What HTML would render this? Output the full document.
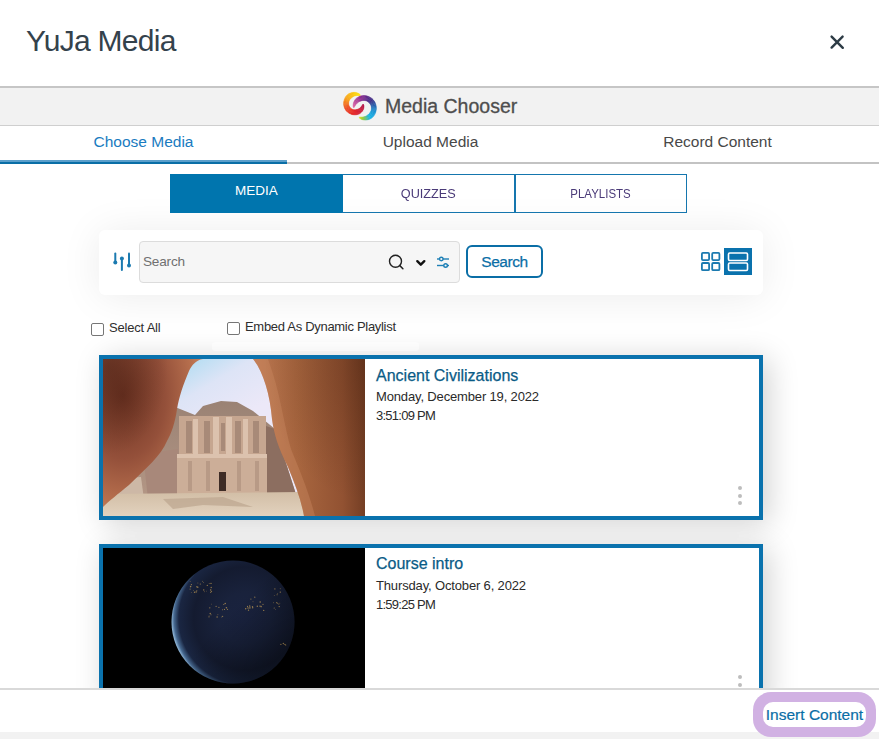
<!DOCTYPE html>
<html><head><meta charset="utf-8">
<style>
*{box-sizing:border-box;margin:0;padding:0}
html,body{width:879px;height:739px;overflow:hidden;background:#fff;font-family:"Liberation Sans",sans-serif;position:relative}
.abs{position:absolute}
.title{left:26px;top:22px;font-size:30px;letter-spacing:-0.7px;color:#34424c;line-height:38px;white-space:nowrap}
.close{left:831px;top:36px;width:12px;height:12px}
.bar{left:0;top:86px;width:879px;height:40px;background:#f2f2f2;border-top:2px solid #c6c6c6;border-bottom:1px solid #cfcfcf}
.mc{left:385px;top:95px;font-size:19.5px;color:#4e4e4e;-webkit-text-stroke:0.3px #4e4e4e;line-height:22px;white-space:nowrap}
.tab{top:126px;height:36px;line-height:32px;font-size:15.5px;text-align:center;color:#484848;white-space:nowrap}
.gline{left:0;top:162px;width:879px;height:2px;background:#c3c3c3}
.bline1{left:0;top:160px;width:287px;height:2px;background:#5b9fcb}
.bline2{left:0;top:162px;width:287px;height:2px;background:#0a6ea6}
.footer{left:0;top:688px;width:879px;height:44px;background:#fff;border-top:2px solid #d9d9d9}
.bottom{left:0;top:732px;width:879px;height:7px;background:#f2f2f2}
.st{top:174px;height:39px;font-size:13.5px;text-align:center;white-space:nowrap}
.st1{left:170px;width:173px;background:#0075ae;color:#fff;line-height:34px}
.st2{left:342px;width:173px;border:1px solid #1576ae;border-left:none;color:#4a3a78;line-height:38px}
.st3{left:514px;width:173px;border:1px solid #1576ae;border-left-width:2px;color:#4a3a78;line-height:38px}
.scard{left:99px;top:230px;width:664px;height:65px;background:#fff;border-radius:6px;box-shadow:0 2px 40px rgba(0,0,0,.08)}
.sinput{left:139px;top:241px;width:321px;height:42px;background:#f6f6f6;border:1px solid #dcdcdc;border-radius:4px}
.sph{left:143px;top:253px;font-size:13.6px;letter-spacing:-0.2px;color:#707070;line-height:18px}
.sbtn{left:466px;top:245px;width:77px;height:33px;border:2px solid #0a6ea6;border-radius:6px;color:#0a6ea6;font-size:15.5px;letter-spacing:-0.45px;-webkit-text-stroke:0.25px #0a6ea6;line-height:29px;text-align:center}
.cb{width:13px;height:13px;border:1px solid #767676;border-radius:2px;background:#fff}
.lbl{font-size:13px;color:#2e2e2e;line-height:16px;white-space:nowrap}
.card{left:99px;width:664px;height:165px;border:4px solid #0a72ad;background:#fff;box-shadow:6px 4px 28px rgba(0,0,0,.18)}
.ctitle{font-size:16px;color:#0a5b86;-webkit-text-stroke:0.25px #0a5b86;line-height:20px;white-space:nowrap}
.cdate{font-size:13px;color:#2a2a2a;line-height:16px;white-space:nowrap}
.dot{width:4px;height:4px;border-radius:50%;background:#bdbdbd}
.ins{left:753px;top:692px;width:123px;height:45px;border-radius:18px;background:#d1b1e3}
.insin{left:763px;top:702px;width:103px;height:25px;border-radius:10px;background:#fff;color:#0a6ea6;-webkit-text-stroke:0.2px #0a6ea6;font-size:15.5px;line-height:26px;text-align:center;white-space:nowrap}
</style></head><body>
<div class="abs title">YuJa Media</div>
<svg class="abs close" viewBox="0 0 12 12" style="overflow:visible"><path d="M0.6 0.6L11.8 11.8M11.6 0.6L0.6 11.6" stroke="#2d3b45" stroke-width="2.4" stroke-linecap="round"/></svg>
<div class="abs bar"></div>
<svg class="abs" style="left:338px;top:88px" width="45" height="36" viewBox="0 0 45 36"><path d="M22.39 7.40L21.74 6.29L21.14 7.55L22.39 7.40Z" fill="#fee500" stroke="#fee500" stroke-width="0.45"/><path d="M21.74 6.29L20.79 5.58L20.11 7.50L21.14 7.55Z" fill="#fee102" stroke="#fee102" stroke-width="0.45"/><path d="M20.79 5.58L19.71 5.04L19.13 7.52L20.11 7.50Z" fill="#fddc04" stroke="#fddc04" stroke-width="0.45"/><path d="M19.71 5.04L18.56 4.66L18.19 7.61L19.13 7.52Z" fill="#fdd706" stroke="#fdd706" stroke-width="0.45"/><path d="M18.56 4.66L17.35 4.42L17.30 7.77L18.19 7.61Z" fill="#fdd308" stroke="#fdd308" stroke-width="0.45"/><path d="M17.35 4.42L16.11 4.35L16.46 8.02L17.30 7.77Z" fill="#fcce09" stroke="#fcce09" stroke-width="0.45"/><path d="M16.11 4.35L14.85 4.43L15.66 8.33L16.46 8.02Z" fill="#fcc90b" stroke="#fcc90b" stroke-width="0.45"/><path d="M14.85 4.43L13.60 4.66L14.92 8.72L15.66 8.33Z" fill="#fbc50d" stroke="#fbc50d" stroke-width="0.45"/><path d="M13.60 4.66L12.38 5.04L14.24 9.16L14.92 8.72Z" fill="#fbc00f" stroke="#fbc00f" stroke-width="0.45"/><path d="M12.38 5.04L11.21 5.56L13.62 9.66L14.24 9.16Z" fill="#fbbb11" stroke="#fbbb11" stroke-width="0.45"/><path d="M11.21 5.56L10.10 6.23L13.07 10.21L13.62 9.66Z" fill="#fab712" stroke="#fab712" stroke-width="0.45"/><path d="M10.10 6.23L9.12 7.08L12.53 10.74L13.07 10.21Z" fill="#fab214" stroke="#fab214" stroke-width="0.45"/><path d="M9.12 7.08L8.25 8.04L12.04 11.31L12.53 10.74Z" fill="#f9ad16" stroke="#f9ad16" stroke-width="0.45"/><path d="M8.25 8.04L7.50 9.09L11.62 11.92L12.04 11.31Z" fill="#f9a918" stroke="#f9a918" stroke-width="0.45"/><path d="M7.50 9.09L6.86 10.21L11.26 12.58L11.62 11.92Z" fill="#f8a41a" stroke="#f8a41a" stroke-width="0.45"/><path d="M6.86 10.21L6.35 11.39L10.99 13.27L11.26 12.58Z" fill="#f79a1b" stroke="#f79a1b" stroke-width="0.45"/><path d="M6.35 11.39L5.98 12.62L10.79 13.97L10.99 13.27Z" fill="#f6911b" stroke="#f6911b" stroke-width="0.45"/><path d="M5.98 12.62L5.73 13.87L10.67 14.70L10.79 13.97Z" fill="#f5871c" stroke="#f5871c" stroke-width="0.45"/><path d="M5.73 13.87L5.63 15.14L10.62 15.42L10.67 14.70Z" fill="#f47e1d" stroke="#f47e1d" stroke-width="0.45"/><path d="M5.63 15.14L5.67 16.41L10.66 16.15L10.62 15.42Z" fill="#f3741e" stroke="#f3741e" stroke-width="0.45"/><path d="M5.67 16.41L5.84 17.66L10.77 16.86L10.66 16.15Z" fill="#f26b1f" stroke="#f26b1f" stroke-width="0.45"/><path d="M5.84 17.66L6.14 18.88L10.96 17.54L10.77 16.86Z" fill="#f06120" stroke="#f06120" stroke-width="0.45"/><path d="M6.14 18.88L6.58 20.06L11.22 18.20L10.96 17.54Z" fill="#ef5821" stroke="#ef5821" stroke-width="0.45"/><path d="M6.58 20.06L7.13 21.18L11.55 18.83L11.22 18.20Z" fill="#ee4e22" stroke="#ee4e22" stroke-width="0.45"/><path d="M7.13 21.18L7.81 22.22L11.94 19.41L11.55 18.83Z" fill="#ed4723" stroke="#ed4723" stroke-width="0.45"/><path d="M7.81 22.22L8.59 23.18L12.39 19.94L11.94 19.41Z" fill="#ec4323" stroke="#ec4323" stroke-width="0.45"/><path d="M8.59 23.18L9.47 24.05L12.89 20.41L12.39 19.94Z" fill="#eb3e23" stroke="#eb3e23" stroke-width="0.45"/><path d="M9.47 24.05L10.43 24.82L13.44 20.82L12.89 20.41Z" fill="#e93923" stroke="#e93923" stroke-width="0.45"/><path d="M10.43 24.82L11.47 25.47L14.02 21.17L13.44 20.82Z" fill="#e83523" stroke="#e83523" stroke-width="0.45"/><path d="M11.47 25.47L12.57 26.00L14.64 21.45L14.02 21.17Z" fill="#e73023" stroke="#e73023" stroke-width="0.45"/><path d="M12.57 26.00L13.71 26.41L15.28 21.66L14.64 21.45Z" fill="#e62c23" stroke="#e62c23" stroke-width="0.45"/><path d="M13.71 26.41L14.89 26.69L15.93 21.80L15.28 21.66Z" fill="#e52723" stroke="#e52723" stroke-width="0.45"/><path d="M14.89 26.69L16.09 26.84L16.59 21.86L15.93 21.80Z" fill="#e42323" stroke="#e42323" stroke-width="0.45"/><path d="M16.09 26.84L17.30 26.85L17.25 21.85L16.59 21.86Z" fill="#e31e23" stroke="#e31e23" stroke-width="0.45"/><path d="M17.30 26.85L18.49 26.74L17.90 21.77L17.25 21.85Z" fill="#df1d26" stroke="#df1d26" stroke-width="0.45"/><path d="M18.49 26.74L19.66 26.49L18.54 21.62L17.90 21.77Z" fill="#dc1d29" stroke="#dc1d29" stroke-width="0.45"/><path d="M19.66 26.49L20.79 26.11L19.15 21.42L18.54 21.62Z" fill="#d81c2c" stroke="#d81c2c" stroke-width="0.45"/><path d="M20.79 26.11L21.83 25.52L19.78 21.23L19.15 21.42Z" fill="#d51c2f" stroke="#d51c2f" stroke-width="0.45"/><path d="M21.83 25.52L22.78 24.83L20.40 20.98L19.78 21.23Z" fill="#d11b32" stroke="#d11b32" stroke-width="0.45"/><path d="M22.78 24.83L23.62 24.04L21.00 20.67L20.40 20.98Z" fill="#ce1b35" stroke="#ce1b35" stroke-width="0.45"/><path d="M23.62 24.04L24.36 23.16L21.57 20.30L21.00 20.67Z" fill="#ca1a38" stroke="#ca1a38" stroke-width="0.45"/><path d="M24.36 23.16L24.97 22.21L22.12 19.87L21.57 20.30Z" fill="#c71a3b" stroke="#c71a3b" stroke-width="0.45"/><path d="M24.97 22.21L25.45 21.21L22.65 19.38L22.12 19.87Z" fill="#c3193d" stroke="#c3193d" stroke-width="0.45"/><path d="M25.45 21.21L25.79 20.18L23.14 18.83L22.65 19.38Z" fill="#bf1940" stroke="#bf1940" stroke-width="0.45"/><path d="M25.79 20.18L25.98 19.13L23.60 18.23L23.14 18.83Z" fill="#bc1843" stroke="#bc1843" stroke-width="0.45"/><path d="M25.98 19.13L26.01 18.08L24.03 17.57L23.60 18.23Z" fill="#b81846" stroke="#b81846" stroke-width="0.45"/><path d="M26.01 18.08L25.84 17.05L24.46 16.85L24.03 17.57Z" fill="#b51749" stroke="#b51749" stroke-width="0.45"/><path d="M25.84 17.05L25.20 16.08L25.20 16.08L24.46 16.85Z" fill="#b1174c" stroke="#b1174c" stroke-width="0.45"/><path d="M15.71 19.84L15.13 18.65L16.48 18.85L15.71 19.84Z" fill="#e467a6" stroke="#e467a6" stroke-width="0.45"/><path d="M15.13 18.65L15.05 17.43L16.98 17.92L16.48 18.85Z" fill="#dc62a4" stroke="#dc62a4" stroke-width="0.45"/><path d="M15.05 17.43L15.17 16.19L17.51 17.06L16.98 17.92Z" fill="#d45ca2" stroke="#d45ca2" stroke-width="0.45"/><path d="M15.17 16.19L15.47 14.97L18.08 16.28L17.51 17.06Z" fill="#cd57a0" stroke="#cd57a0" stroke-width="0.45"/><path d="M15.47 14.97L15.94 13.78L18.69 15.56L18.08 16.28Z" fill="#c5529e" stroke="#c5529e" stroke-width="0.45"/><path d="M15.94 13.78L16.55 12.64L19.35 14.92L18.69 15.56Z" fill="#bd4c9c" stroke="#bd4c9c" stroke-width="0.45"/><path d="M16.55 12.64L17.30 11.58L20.06 14.35L19.35 14.92Z" fill="#b64799" stroke="#b64799" stroke-width="0.45"/><path d="M17.30 11.58L18.18 10.60L20.80 13.87L20.06 14.35Z" fill="#ae4297" stroke="#ae4297" stroke-width="0.45"/><path d="M18.18 10.60L19.18 9.73L21.56 13.47L20.80 13.87Z" fill="#a63c95" stroke="#a63c95" stroke-width="0.45"/><path d="M19.18 9.73L20.29 8.97L22.35 13.15L21.56 13.47Z" fill="#9f3793" stroke="#9f3793" stroke-width="0.45"/><path d="M20.29 8.97L21.48 8.34L23.16 12.91L22.35 13.15Z" fill="#973291" stroke="#973291" stroke-width="0.45"/><path d="M21.48 8.34L22.76 7.93L23.95 12.68L23.16 12.91Z" fill="#8f2c8f" stroke="#8f2c8f" stroke-width="0.45"/><path d="M22.76 7.93L24.09 7.67L24.76 12.52L23.95 12.68Z" fill="#872a8d" stroke="#872a8d" stroke-width="0.45"/><path d="M24.09 7.67L25.43 7.56L25.58 12.45L24.76 12.52Z" fill="#7f2a8c" stroke="#7f2a8c" stroke-width="0.45"/><path d="M25.43 7.56L26.78 7.59L26.40 12.47L25.58 12.45Z" fill="#762a8b" stroke="#762a8b" stroke-width="0.45"/><path d="M26.78 7.59L28.12 7.77L27.22 12.58L26.40 12.47Z" fill="#6e2a8b" stroke="#6e2a8b" stroke-width="0.45"/><path d="M28.12 7.77L29.43 8.09L28.02 12.78L27.22 12.58Z" fill="#652a8a" stroke="#652a8a" stroke-width="0.45"/><path d="M29.43 8.09L30.70 8.56L28.79 13.07L28.02 12.78Z" fill="#5d2b89" stroke="#5d2b89" stroke-width="0.45"/><path d="M30.70 8.56L31.92 9.15L29.53 13.43L28.79 13.07Z" fill="#542b88" stroke="#542b88" stroke-width="0.45"/><path d="M31.92 9.15L33.06 9.88L30.22 13.88L29.53 13.43Z" fill="#4b2b87" stroke="#4b2b87" stroke-width="0.45"/><path d="M33.06 9.88L34.12 10.73L30.87 14.40L30.22 13.88Z" fill="#432b86" stroke="#432b86" stroke-width="0.45"/><path d="M34.12 10.73L35.08 11.68L31.46 14.98L30.87 14.40Z" fill="#3a2b86" stroke="#3a2b86" stroke-width="0.45"/><path d="M35.08 11.68L35.93 12.73L31.98 15.63L31.46 14.98Z" fill="#37358c" stroke="#37358c" stroke-width="0.45"/><path d="M35.93 12.73L36.67 13.87L32.43 16.32L31.98 15.63Z" fill="#333f94" stroke="#333f94" stroke-width="0.45"/><path d="M36.67 13.87L37.28 15.09L32.80 17.07L32.43 16.32Z" fill="#30499c" stroke="#30499c" stroke-width="0.45"/><path d="M37.28 15.09L37.76 16.36L33.09 17.85L32.80 17.07Z" fill="#2d54a4" stroke="#2d54a4" stroke-width="0.45"/><path d="M37.76 16.36L38.10 17.68L33.30 18.65L33.09 17.85Z" fill="#295eab" stroke="#295eab" stroke-width="0.45"/><path d="M38.10 17.68L38.30 19.02L33.42 19.48L33.30 18.65Z" fill="#2668b3" stroke="#2668b3" stroke-width="0.45"/><path d="M38.30 19.02L38.35 20.38L33.45 20.31L33.42 19.48Z" fill="#2373bb" stroke="#2373bb" stroke-width="0.45"/><path d="M38.35 20.38L38.26 21.74L33.39 21.14L33.45 20.31Z" fill="#1f7dc2" stroke="#1f7dc2" stroke-width="0.45"/><path d="M38.26 21.74L38.02 23.08L33.25 21.97L33.39 21.14Z" fill="#1c87ca" stroke="#1c87ca" stroke-width="0.45"/><path d="M38.02 23.08L37.64 24.39L33.02 22.77L33.25 21.97Z" fill="#1990d1" stroke="#1990d1" stroke-width="0.45"/><path d="M37.64 24.39L37.13 25.65L32.70 23.54L33.02 22.77Z" fill="#1896d4" stroke="#1896d4" stroke-width="0.45"/><path d="M37.13 25.65L36.48 26.84L32.31 24.27L32.70 23.54Z" fill="#189bd7" stroke="#189bd7" stroke-width="0.45"/><path d="M36.48 26.84L35.71 27.96L31.84 24.95L32.31 24.27Z" fill="#17a0db" stroke="#17a0db" stroke-width="0.45"/><path d="M35.71 27.96L34.83 28.99L31.30 25.58L31.84 24.95Z" fill="#16a6de" stroke="#16a6de" stroke-width="0.45"/><path d="M34.83 28.99L33.83 29.90L30.71 26.16L31.30 25.58Z" fill="#15abe1" stroke="#15abe1" stroke-width="0.45"/><path d="M33.83 29.90L32.69 30.63L30.11 26.75L30.71 26.16Z" fill="#14b1e5" stroke="#14b1e5" stroke-width="0.45"/><path d="M32.69 30.63L31.49 31.21L29.44 27.28L30.11 26.75Z" fill="#16b6e5" stroke="#16b6e5" stroke-width="0.45"/><path d="M31.49 31.21L30.24 31.65L28.71 27.75L29.44 27.28Z" fill="#2ab9c7" stroke="#2ab9c7" stroke-width="0.45"/><path d="M30.24 31.65L28.95 31.93L27.93 28.16L28.71 27.75Z" fill="#3fbbaa" stroke="#3fbbaa" stroke-width="0.45"/><path d="M28.95 31.93L27.66 32.06L27.10 28.49L27.93 28.16Z" fill="#54be8d" stroke="#54be8d" stroke-width="0.45"/><path d="M27.66 32.06L26.38 32.03L26.22 28.75L27.10 28.49Z" fill="#69c16f" stroke="#69c16f" stroke-width="0.45"/><path d="M26.38 32.03L25.13 31.84L25.30 28.93L26.22 28.75Z" fill="#7ec452" stroke="#7ec452" stroke-width="0.45"/><path d="M25.13 31.84L23.93 31.49L24.34 29.03L25.30 28.93Z" fill="#93c83c" stroke="#93c83c" stroke-width="0.45"/><path d="M23.93 31.49L22.80 30.98L23.34 29.06L24.34 29.03Z" fill="#a8d033" stroke="#a8d033" stroke-width="0.45"/><path d="M22.80 30.98L21.79 30.30L22.30 29.03L23.34 29.06Z" fill="#bed82b" stroke="#bed82b" stroke-width="0.45"/><path d="M21.79 30.30L21.06 29.21L21.06 29.21L22.30 29.03Z" fill="#d4e023" stroke="#d4e023" stroke-width="0.45"/></svg>

<div class="abs mc">Media Chooser</div>
<div class="abs tab" style="left:0;width:287px;color:#1a7bbf">Choose Media</div>
<div class="abs tab" style="left:287px;width:287px">Upload Media</div>
<div class="abs tab" style="left:574px;width:287px">Record Content</div>
<div class="abs gline"></div>
<div class="abs bline1"></div>
<div class="abs bline2"></div>

<div class="abs scard"></div>
<div class="abs card" style="top:355px"></div>
<div class="abs card" style="top:544px"></div>

<div class="abs st st1">MEDIA</div>
<div class="abs st st2"><span style="display:inline-block;transform:scaleX(.94)">QUIZZES</span></div>
<div class="abs st st3"><span style="display:inline-block;transform:scaleX(.85)">PLAYLISTS</span></div>

<svg class="abs" style="left:110px;top:250px" width="24" height="24" viewBox="0 0 24 24">
<g stroke="#1b7ab0" stroke-width="2" stroke-linecap="round" fill="#1b7ab0">
<line x1="5.3" y1="3.5" x2="5.3" y2="12"/><circle cx="5.3" cy="12.5" r="2" stroke="none"/>
<line x1="11.9" y1="9" x2="11.9" y2="20"/><circle cx="11.9" cy="8.5" r="2" stroke="none"/>
<line x1="19" y1="3.5" x2="19" y2="15"/><circle cx="19" cy="15.5" r="2" stroke="none"/>
</g></svg>
<div class="abs sinput"></div>
<div class="abs sph">Search</div>
<svg class="abs" style="left:385px;top:250px" width="70" height="24" viewBox="0 0 70 24">
<circle cx="10.5" cy="11.3" r="6" fill="none" stroke="#222" stroke-width="1.4"/>
<line x1="14.8" y1="15.6" x2="17.9" y2="18.7" stroke="#222" stroke-width="1.5" stroke-linecap="round"/>
<path d="M32.3 11.2L35.8 14.7L39.3 11.2" fill="none" stroke="#111" stroke-width="2.4" stroke-linecap="round" stroke-linejoin="round"/>
<g stroke="#1f80b6" stroke-width="1.4" fill="#f6f6f6">
<line x1="52" y1="9" x2="64" y2="9"/><line x1="52" y1="15.5" x2="64" y2="15.5"/>
<circle cx="56.3" cy="9" r="1.8"/><circle cx="60.6" cy="15.5" r="1.8"/>
</g></svg>
<div class="abs sbtn">Search</div>
<svg class="abs" style="left:700px;top:247px" width="54" height="29" viewBox="0 0 54 29">
<g fill="none" stroke="#1b7ab0" stroke-width="1.8">
<rect x="1.9" y="5.9" width="7.2" height="7.2" rx="1"/><rect x="12.2" y="5.9" width="7.2" height="7.2" rx="1"/>
<rect x="1.9" y="16" width="7.2" height="7.2" rx="1"/><rect x="12.2" y="16" width="7.2" height="7.2" rx="1"/>
</g>
<rect x="24" y="1" width="28" height="27" fill="#0a72ad"/>
<g fill="none" stroke="#fff" stroke-width="1.6">
<rect x="28.5" y="6" width="19" height="7.5" rx="1.2"/><rect x="28.5" y="16" width="19" height="7.5" rx="1.2"/>
</g></svg>

<div class="abs" style="left:212px;top:342px;width:207px;height:9px;background:rgba(255,255,255,.45);border-radius:3px"></div>
<div class="abs cb" style="left:91px;top:323px"></div>
<div class="abs lbl" style="left:109px;top:320px;letter-spacing:-0.2px">Select All</div>
<div class="abs cb" style="left:227px;top:322px"></div>
<div class="abs lbl" style="left:245px;top:318.5px;letter-spacing:-0.3px">Embed As Dynamic Playlist</div>

<svg class="abs" style="left:103px;top:359px" width="262" height="157" viewBox="0 0 262 157">
<defs>
<linearGradient id="sky" x1="0.3" y1="0" x2="0.6" y2="0.3"><stop offset="0" stop-color="#aedcf2"/><stop offset="0.45" stop-color="#dde4f6"/><stop offset="1" stop-color="#ece8f8"/></linearGradient>
<radialGradient id="lr" cx="0.2" cy="0.25" r="0.85"><stop offset="0" stop-color="#6e3322"/><stop offset="0.5" stop-color="#94503a"/><stop offset="0.85" stop-color="#b8704e"/><stop offset="1" stop-color="#c88462"/></radialGradient>
<linearGradient id="rr" x1="0" y1="0" x2="1" y2="0"><stop offset="0" stop-color="#bc7852"/><stop offset="0.4" stop-color="#a8663f"/><stop offset="0.8" stop-color="#925232"/><stop offset="1" stop-color="#743e24"/></linearGradient>
<radialGradient id="rdk" cx="1" cy="0" r="0.9"><stop offset="0" stop-color="#3a1808" stop-opacity=".3"/><stop offset="1" stop-color="#3a1808" stop-opacity="0"/></radialGradient>
<radialGradient id="ldk" cx="0.05" cy="0.05" r="0.6"><stop offset="0" stop-color="#2a1008" stop-opacity=".35"/><stop offset="1" stop-color="#2a1008" stop-opacity="0"/></radialGradient>
<linearGradient id="mt" x1="0" y1="0" x2="0" y2="1"><stop offset="0" stop-color="#9a8274"/><stop offset="1" stop-color="#b89a88"/></linearGradient>
<linearGradient id="gr" x1="0" y1="0" x2="0" y2="1"><stop offset="0" stop-color="#d2bea6"/><stop offset="1" stop-color="#e2d2be"/></linearGradient>
</defs>
<rect width="262" height="157" fill="url(#sky)"/>
<path d="M62 44L92 56L100 47L118 42L134 43L150 52L172 70L200 157L0 157L0 70Z" fill="url(#mt)"/>
<path d="M160 66L172 70L200 157L160 140Z" fill="#8c6e60"/>
<path d="M40 95L75 90L78 135L45 140Z" fill="#a8887a"/>
<rect x="76" y="57" width="87" height="39" fill="#c6a690"/>
<rect x="74" y="96" width="90" height="39" fill="#ccae98"/>
<g fill="#a88a78"><rect x="83" y="62" width="6" height="32"/><rect x="101" y="62" width="6" height="32"/><rect x="132" y="62" width="6" height="32"/><rect x="150" y="62" width="6" height="32"/><rect x="118" y="64" width="4" height="28"/></g>
<g fill="#dcc2ae"><rect x="90" y="60" width="5" height="35"/><rect x="110" y="58" width="6" height="37"/><rect x="123" y="58" width="6" height="37"/><rect x="140" y="60" width="5" height="35"/><rect x="74" y="95" width="90" height="4"/></g>
<g fill="#b89a86"><rect x="85" y="102" width="4" height="30"/><rect x="103" y="102" width="4" height="30"/><rect x="134" y="102" width="4" height="30"/><rect x="152" y="102" width="4" height="30"/></g>
<rect x="116" y="113" width="7" height="19" fill="#3e2c26"/>
<path d="M8 120L38 118L42 148L10 150Z" fill="#cdb8a6"/>
<path d="M0 135L200 133L203 157L0 157Z" fill="url(#gr)"/>
<path d="M60 140L120 138L150 148L100 146L70 150Z" fill="#bca58e" opacity=".7"/>
<path d="M0 0L100 0C93 1 89 6 86 12C80 26 76 38 74 50C72 65 68 75 64 82C58 97 42 110 26 126C15 135 6 142 0 148Z" fill="url(#lr)"/>
<path d="M150 0C160 12 167 35 169 60C171 75 175 88 185 108C192 125 198 140 201 157L262 157L262 0Z" fill="url(#rr)"/>
<path d="M150 0C160 12 167 35 169 60C171 75 175 88 185 108C192 125 198 140 201 157L212 157C205 130 196 110 188 90C182 70 178 40 170 15L165 0Z" fill="#d08e66" opacity=".35"/>
<path d="M150 0C160 12 167 35 169 60C171 75 175 88 185 108C192 125 198 140 201 157L262 157L262 0Z" fill="url(#rdk)"/>
<path d="M0 0L100 0C93 1 89 6 86 12C80 26 76 38 74 50C72 65 68 75 64 82C58 97 42 110 26 126C15 135 6 142 0 148Z" fill="url(#ldk)"/>
</svg>
<div class="abs ctitle" style="left:376px;top:366px">Ancient Civilizations</div>
<div class="abs cdate" style="left:376px;top:389px;letter-spacing:-0.15px">Monday, December 19, 2022</div>
<div class="abs cdate" style="left:376px;top:408px;letter-spacing:-0.75px">3:51:09 PM</div>
<div class="abs dot" style="left:738px;top:486px"></div>
<div class="abs dot" style="left:738px;top:494px"></div>
<div class="abs dot" style="left:738px;top:501px"></div>

<svg class="abs" style="left:103px;top:548px" width="262" height="140" viewBox="0 0 262 140">
<defs>
<radialGradient id="eg" cx="0.6" cy="0.47" r="0.6"><stop offset="0" stop-color="#1a2340"/><stop offset="0.35" stop-color="#19223c"/><stop offset="0.7" stop-color="#141b30"/><stop offset="0.9" stop-color="#1a2642"/><stop offset="0.965" stop-color="#46688f"/><stop offset="1" stop-color="#8cb2d4"/></radialGradient>
<linearGradient id="ed" x1="0" y1="0" x2="1" y2="1"><stop offset="0.45" stop-color="#000" stop-opacity="0"/><stop offset="1" stop-color="#000" stop-opacity=".55"/></linearGradient>
<filter id="bl2"><feGaussianBlur stdDeviation="0.5"/></filter>
<clipPath id="gc"><circle cx="130" cy="74" r="61.5"/></clipPath>
</defs>
<rect width="262" height="140" fill="#000"/>
<circle cx="130" cy="74" r="61.5" fill="url(#eg)"/>
<circle cx="130" cy="74" r="61.5" fill="url(#ed)"/>
<g fill="#e8b85c" opacity=".6" filter="url(#bl2)" clip-path="url(#gc)"><circle cx="100.7" cy="41.9" r="0.72"/><circle cx="107.7" cy="41.9" r="0.77"/><circle cx="87.6" cy="38.6" r="0.78"/><circle cx="101.3" cy="43.8" r="0.45"/><circle cx="97.3" cy="36.0" r="0.62"/><circle cx="99.6" cy="33.2" r="0.49"/><circle cx="93.1" cy="44.0" r="0.71"/><circle cx="90.5" cy="42.6" r="0.46"/><circle cx="100.6" cy="34.5" r="0.40"/><circle cx="106.2" cy="35.5" r="0.49"/><circle cx="108.6" cy="43.5" r="0.52"/><circle cx="108.2" cy="39.5" r="0.67"/><circle cx="91.5" cy="44.3" r="0.68"/><circle cx="108.3" cy="43.7" r="0.52"/><circle cx="94.9" cy="35.0" r="0.46"/><circle cx="88.4" cy="36.6" r="0.64"/><circle cx="87.1" cy="41.1" r="0.54"/><circle cx="93.8" cy="42.8" r="0.59"/><circle cx="93.9" cy="38.8" r="0.68"/><circle cx="88.3" cy="44.7" r="0.41"/><circle cx="103.5" cy="43.1" r="0.41"/><circle cx="104.3" cy="37.4" r="0.63"/><circle cx="87.2" cy="33.6" r="0.47"/><circle cx="108.0" cy="35.4" r="0.70"/><circle cx="107.5" cy="44.3" r="0.54"/><circle cx="94.8" cy="39.3" r="0.71"/><circle cx="107.2" cy="65.5" r="0.72"/><circle cx="122.2" cy="55.5" r="0.78"/><circle cx="106.8" cy="59.8" r="0.64"/><circle cx="123.4" cy="59.8" r="0.77"/><circle cx="115.9" cy="59.4" r="0.53"/><circle cx="108.5" cy="56.1" r="0.46"/><circle cx="118.8" cy="69.0" r="0.46"/><circle cx="106.0" cy="68.8" r="0.61"/><circle cx="113.1" cy="58.3" r="0.64"/><circle cx="121.5" cy="61.4" r="0.57"/><circle cx="106.1" cy="67.8" r="0.41"/><circle cx="114.9" cy="66.7" r="0.45"/><circle cx="119.6" cy="68.3" r="0.65"/><circle cx="120.8" cy="56.5" r="0.57"/><circle cx="108.0" cy="66.8" r="0.52"/><circle cx="114.1" cy="69.0" r="0.74"/><circle cx="124.5" cy="61.3" r="0.60"/><circle cx="119.6" cy="61.7" r="0.52"/><circle cx="147.9" cy="51.1" r="0.55"/><circle cx="160.7" cy="62.4" r="0.65"/><circle cx="150.0" cy="53.7" r="0.44"/><circle cx="145.0" cy="59.9" r="0.75"/><circle cx="146.9" cy="60.0" r="0.71"/><circle cx="154.3" cy="58.3" r="0.70"/><circle cx="147.0" cy="58.9" r="0.51"/><circle cx="149.7" cy="59.8" r="0.68"/><circle cx="145.5" cy="62.2" r="0.66"/><circle cx="151.8" cy="49.2" r="0.62"/><circle cx="144.5" cy="58.4" r="0.59"/><circle cx="157.0" cy="58.1" r="0.72"/><circle cx="146.7" cy="58.0" r="0.70"/><circle cx="157.2" cy="53.9" r="0.74"/><circle cx="158.1" cy="58.6" r="0.79"/><circle cx="160.0" cy="56.3" r="0.61"/><circle cx="142.7" cy="60.7" r="0.77"/><circle cx="149.5" cy="58.7" r="0.69"/><circle cx="177.3" cy="44.1" r="0.71"/><circle cx="175.8" cy="56.0" r="0.57"/><circle cx="176.2" cy="58.6" r="0.65"/><circle cx="177.2" cy="40.7" r="0.46"/><circle cx="174.4" cy="55.6" r="0.49"/><circle cx="176.9" cy="55.1" r="0.42"/><circle cx="174.7" cy="45.4" r="0.42"/><circle cx="171.3" cy="47.6" r="0.47"/><circle cx="171.9" cy="40.9" r="0.59"/><circle cx="173.8" cy="54.7" r="0.64"/><circle cx="172.4" cy="61.7" r="0.40"/><circle cx="174.1" cy="46.7" r="0.56"/><circle cx="171.2" cy="60.0" r="0.55"/><circle cx="170.4" cy="54.7" r="0.44"/><circle cx="180.3" cy="95.5" r="0.63"/><circle cx="182.7" cy="97.0" r="0.57"/><circle cx="181.9" cy="96.4" r="0.55"/><circle cx="177.9" cy="96.3" r="0.63"/></g>
</svg>
<div class="abs ctitle" style="left:376px;top:554px">Course intro</div>
<div class="abs cdate" style="left:376px;top:578px;letter-spacing:-0.15px">Thursday, October 6, 2022</div>
<div class="abs cdate" style="left:376px;top:597px;letter-spacing:-0.75px">1:59:25 PM</div>
<div class="abs dot" style="left:738px;top:675px"></div>
<div class="abs dot" style="left:738px;top:683px"></div>

<div class="abs footer"></div>
<div class="abs bottom"></div>
<div class="abs ins"></div>
<div class="abs insin">Insert Content</div>
</body></html>
